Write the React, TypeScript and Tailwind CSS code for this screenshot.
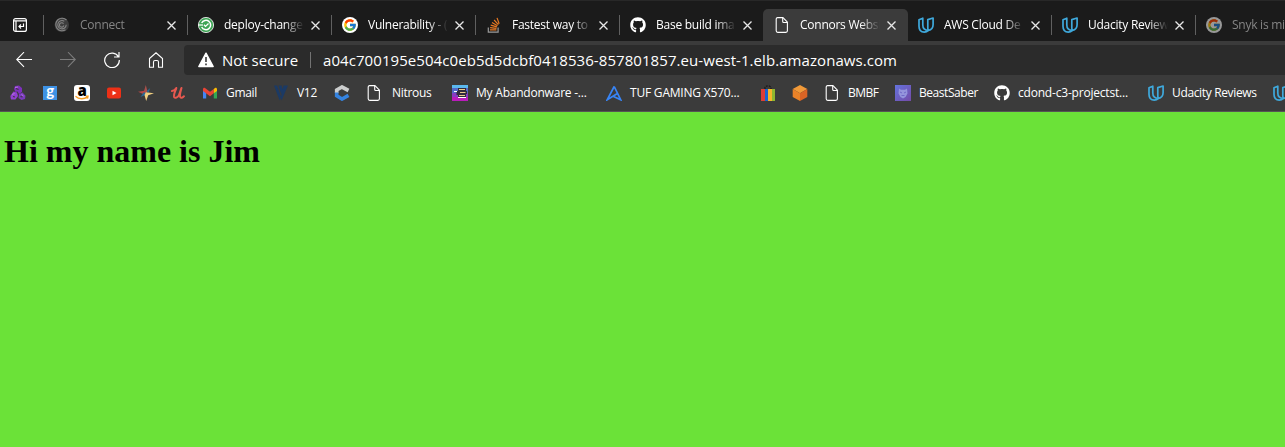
import type { ReactNode } from "react";
import { FcGoogle } from "react-icons/fc";
import { FaGithub } from "react-icons/fa";

const svg = "block h-4 w-4 shrink-0";

const Doc = () => (
  <svg className={svg} viewBox="0 0 16 16" fill="none" stroke="#fff" strokeWidth="1.1" strokeLinejoin="round">
    <path d="M3.5.6H9l4.400 4.600v8.600c0 .9-.6 1.600-1.500 1.600H3.700c-.9 0-1.500-.7-1.500-1.600V2.100C2.200 1.200 2.700.6 3.500.6Z" />
    <path d="M8.700.8v3.700c0 .6.4 1 1 1h3.500" />
  </svg>
);
const Google = ({ dim = false }: { dim?: boolean }) => (
  <span className={`flex h-4 w-4 shrink-0 items-center justify-center rounded-full bg-white ${dim ? "opacity-55" : ""}`}>
    <FcGoogle size={14} />
  </span>
);
const Github = () => <FaGithub className="shrink-0 text-white" size={16} />;
const Udacity = () => (
  <svg className={svg} viewBox="0 0 16 16" fill="none" stroke="#3fa9dc" strokeWidth="1.700" strokeLinejoin="round">
    <path d="M4.800 1.200 1 2.800v6.500c0 3.500 1.900 5.800 5.300 5.800 1.700 0 3-.6 4-1.700C6.800 13.200 4.800 11.300 4.800 8Z" />
    <path d="M9.800 2.600 15.100 1v6.500c0 3.400-1.700 5.400-4.800 5.900-.4-.8-.5-1.700-.5-3Z" />
  </svg>
);
const Stack = () => (
  <svg className={svg} viewBox="0 0 16 16" fill="none">
    <path d="M2.300 10.500v4.600h9.800v-4.600" stroke="#9b9b9b" strokeWidth="1.200" />
    <path d="M4 12.900h6.400M4.100 10.600l6.400.7M4.700 8.200l6.200 1.700M6 5.500l5.500 3.200M8.100 3l4.300 4.700M11 .9l2.200 5.800" stroke="#e87922" strokeWidth="1.200" />
  </svg>
);
const Spiral = () => (
  <svg className={svg} viewBox="0 0 16 16" fill="none">
    <circle cx="7.800" cy="7.800" r="7.200" fill="#3d3d3d" />
    <path d="M12.500 3A6.300 6.300 0 1 0 11.500 12.800M10.300 4.200A4.200 4.200 0 1 0 12.200 7.800M9.500 6.700A2.200 2.200 0 1 0 9.800 8.500" stroke="#858585" strokeWidth="1.100" />
  </svg>
);
const Circle = () => (
  <svg className={svg} viewBox="0 0 16 16" fill="none">
    <circle cx="8" cy="8" r="7.600" fill="#3fa556" stroke="#fff" strokeWidth=".8" />
    <path d="M3.700 6A4.700 4.700 0 1 1 3.700 10" stroke="#fff" strokeWidth="1.500" />
    <path d="M.2 8H5" stroke="#fff" strokeWidth="1.200" />
    <path d="m6 7.800 1.500 1.600L10.500 6.500" stroke="#fff" strokeWidth="1.300" />
  </svg>
);
const Knot = () => (
  <svg className={svg} viewBox="0 0 16 16">
    <path d="m5 1 4-.5 3 2.500v4L9 9 7.500 6.500 5.500 7 4 4Z" fill="#7d30bd" />
    <path d="m3.500 6.500 3.500 1 1 3.500-2.500 3.500L1 14.500.3 11Z" fill="#9140d1" />
    <path d="m9 9 3.500-1.500 3 3.200-.5 3.300-3.500 1-3-2Z" fill="#7a3bbd" />
    <path d="m6 3.500 2.500 1M3 11.500l2 .5M10.500 11.500l2 .5" stroke="#3b3b3b" strokeWidth="1.200" />
    <path d="m5 2.500 3-.500M2 9.500l2.500-1M11.500 9.500l2 1.500" stroke="#b978e2" strokeWidth="1" />
  </svg>
);
const GBlue = () => (
  <span className="mx-px flex h-[14px] w-[14px] items-center justify-center bg-[#3e92e5] font-['Lato',sans-serif] text-[15px] leading-none font-bold text-white">
    <span className="-mt-[5px]">g</span>
  </span>
);
const Amazon = () => (
  <span className="relative flex h-4 w-4 justify-center rounded-[3px] bg-white font-['Open_Sans',sans-serif] text-[15px] leading-[10px] font-extrabold text-black">
    a
    <svg className="absolute inset-0 h-4 w-4" viewBox="0 0 16 16" fill="none" stroke="#f79d22" strokeWidth="1.400">
      <path d="M1.500 11.300c3.500 3.200 8.500 3.200 12 .6M11.800 11.300l2.200-.1-.5 2.500" />
    </svg>
  </span>
);
const Youtube = () => (
  <svg className={svg} viewBox="0 0 16 16">
    <rect x="1" y="2.500" width="14" height="11" rx="2" fill="#ed3016" />
    <path d="m6.500 5.700 4 2.300-4 2.300Z" fill="#fff" />
  </svg>
);
const Star = () => (
  <svg className={svg} viewBox="0 0 16 16">
    <path d="M7.800 0 9.500 6.500 8 8.500 5.800 6.800Z" fill="#a8504c" />
    <path d="M0 6.800 6.500 5.800 8.200 8 5.800 9.300Z" fill="#b64746" />
    <path d="m2.500 12 3.300-4.800L8 8l-.8 2ZM8.800 6l3.400-3L10.300 8Z" fill="#286a96" />
    <path d="M7.800 7.200 16 8.200 10.200 10.200 8.200 16 6.500 10Z" fill="#f0cf80" />
  </svg>
);
const Udemy = () => (
  <svg className={svg} viewBox="0 0 16 16" fill="none" stroke="#e5584f" strokeWidth="2" strokeLinecap="round" strokeLinejoin="round">
    <path d="M2 6C3.500 5.800 5.500 4.500 6.300 3 6 5 3.500 8.500 4 11.500c.5 2.500 4 1 5-1.500C10 7.500 10.800 4.500 11.500 3 10.500 6.500 9.300 10.500 10.200 12c.8 1.300 2.500.8 3.800-.8" />
  </svg>
);
const Gmail = () => (
  <svg className={svg} viewBox="0 0 16 16">
    <path d="M1 4v9.500h3.200V6Z" fill="#4285f4" />
    <path d="M15 4v9.500h-3.200V6Z" fill="#34a853" />
    <path d="M1 6V4.200C1 3 2 2.300 3 3l5 3.800L11.800 4v4.300L8 11.200Z" fill="#ea4335" />
    <path d="M11.800 4 13 3c1-.7 2 0 2 1.200V6l-3.200 2.300Z" fill="#fbbc04" />
  </svg>
);
const V12 = () => (
  <svg className={svg} viewBox="0 0 16 16" fill="#1b3a65">
    <path d="M1 .5h3l4 11-1.300 4ZM5.500.5h3l1.300 4-1.500 5ZM10.500.5H15L8.500 15.500 7.800 13Z" />
  </svg>
);
const Hexagon = () => (
  <svg className={svg} viewBox="0 0 16 16" fill="none" strokeWidth="3.700">
    <path d="M2.700 8V5L8 2l6.500 3.500" stroke="#cbcdcd" />
    <path d="M2.700 7.500v3.300L8 14l6.500-3.600" stroke="#3583df" />
  </svg>
);
const Abandon = () => (
  <svg className={svg} viewBox="0 0 16 16">
    <path fill="#5ab8ed" d="M0 0h16v4H0Z" /><path fill="#5369c8" d="M0 3h16v5H0Z" /><path fill="#873cc2" d="M0 8h16v4H0Z" /><path fill="#b91cba" d="M0 12h16v4H0Z" />
    <path fill="#2f2b3d" d="M6 3h8v3h1v3h-1v4H6v-3H4.500V6H6Z" />
    <path stroke="#eac98a" d="M7 4.500h6M8 7.500h5.500M7 10.500h6" strokeWidth="1.200" />
    <path stroke="#fff" d="M6 12.500h8M2 6.500h3" />
  </svg>
);
const Triangle = () => (
  <svg className={svg} viewBox="0 0 16 16" fill="none" stroke="#3885f6" strokeWidth="1.700">
    <path d="M8.200 1.500 1.200 14.800 11 8.800M8.200 1.500 14.700 14.800 7 11.200" />
  </svg>
);
const Bag = () => (
  <svg className={svg} viewBox="0 0 16 16">
    <path d="M5 4V2.300L6.500 1h3L11 2.300V4" fill="none" stroke="#171717" strokeWidth="1.200" strokeDasharray="2 1" />
    <path fill="#dd3e36" d="M1 4h4v12H1Z" /><path fill="#1764d1" d="M5 4h3v12H5Z" /><path fill="#f5b52c" d="M8 4h4v12H8Z" /><path fill="#8eb62f" d="M12 4h3v12h-3Z" />
  </svg>
);
const Cube = () => (
  <svg className={svg} viewBox="0 0 16 16">
    <path fill="#f19a39" d="m8 0 7.300 4L8 8.200.7 4Z" /><path fill="#e98228" d="M.7 4 8 8.200V16L.7 12Z" /><path fill="#da6425" d="M15.300 4 8 8.200V16l7.300-4Z" />
  </svg>
);
const Beast = () => (
  <svg className={svg} viewBox="0 0 16 16">
    <defs><linearGradient id="beast" x2="1" y2="1"><stop stopColor="#6473de" /><stop offset="1" stopColor="#744ba7" /></linearGradient></defs>
    <path fill="url(#beast)" d="M0 0h16v16H0Z" />
    <path fill="#9494dc" d="m4 3.500 2 1.300h4l2-1.300.5 5-2 3.500L8 13.500 5.500 12l-2-3.500Z" />
    <path stroke="#7068c8" d="m5 7 2 1M11 7 9 8M6.500 10.500h3" />
  </svg>
);

type Tab = { title: string; icon: ReactNode; dim?: boolean; active?: boolean; sep?: boolean };
const tabs: Tab[] = [
  { title: "Connect", icon: <Spiral />, dim: true, sep: true },
  { title: "deploy-change", icon: <Circle />, sep: true },
  { title: "Vulnerability - (", icon: <Google />, sep: true },
  { title: "Fastest way to", icon: <Stack />, sep: true },
  { title: "Base build ima", icon: <Github />, sep: true },
  { title: "Connors Websi", icon: <Doc />, active: true },
  { title: "AWS Cloud De", icon: <Udacity /> },
  { title: "Udacity Review", icon: <Udacity />, sep: true },
  { title: "Snyk is mis", icon: <Google dim />, dim: true, sep: true },
];

type Bookmark = { icon: ReactNode; label?: string; box: string };
const bookmarks: Bookmark[] = [
  { icon: <Knot />, box: "w-8" },
  { icon: <GBlue />, box: "w-8" },
  { icon: <Amazon />, box: "w-8" },
  { icon: <Youtube />, box: "w-8" },
  { icon: <Star />, box: "w-8" },
  { icon: <Udemy />, box: "w-8" },
  { icon: <Gmail />, label: "Gmail", box: "w-[71px] gap-2" },
  { icon: <V12 />, label: "V12", box: "w-[61px] gap-2" },
  { icon: <Hexagon />, box: "w-8" },
  { icon: <Doc />, label: "Nitrous", box: "w-[86px] gap-[10px]" },
  { icon: <Abandon />, label: "My Abandonware -...", box: "w-[154px] gap-2 tracking-[-0.22px]" },
  { icon: <Triangle />, label: "TUF GAMING X570...", box: "w-[154px] gap-2 tracking-[-0.2px]" },
  { icon: <Bag />, box: "w-8" },
  { icon: <Cube />, box: "w-8" },
  { icon: <Doc />, label: "BMBF", box: "w-[71px] gap-2 tracking-[-0.5px]" },
  { icon: <Beast />, label: "BeastSaber", box: "w-[99px] gap-2 tracking-[-0.45px]" },
  { icon: <Github />, label: "cdond-c3-projectst...", box: "w-[154px] gap-2 tracking-[-0.2px]" },
  { icon: <Udacity />, label: "Udacity Reviews", box: "w-[125px] gap-2 tracking-[-0.35px]" },
  { icon: <Udacity />, box: "w-8" },
];

function TabItem({ tab }: { tab: Tab }) {
  return (
    <div className={`flex h-8 shrink-0 items-center ${tab.active ? "-mr-px w-[145px] rounded-t-[5px] bg-[#3b3b3b]" : "w-36"}`}>
      <span className={`h-5 w-px shrink-0 ${tab.sep ? "bg-[#606060]" : ""}`} />
      <span className="ml-[10px] flex h-4 w-4 shrink-0 items-center justify-center">{tab.icon}</span>
      <span className={`ml-[10px] w-[80px] shrink-0 overflow-hidden whitespace-nowrap text-[12px] leading-4 tracking-[-0.25px] [mask-image:linear-gradient(to_right,black_60px,transparent_80px)] ${tab.dim ? "text-[#858585]" : "text-white"}`}>{tab.title}</span>
      <svg className="ml-[7px] h-[9px] w-[9px] shrink-0" viewBox="0 0 9 9" stroke="#e8e8e8" strokeWidth="1.300"><path d="m.5.5 8 8M8.500.5l-8 8" /></svg>
    </div>
  );
}

export default function App() {
  return (
    <div className="flex h-[447px] w-full flex-col overflow-hidden bg-[#6be238] font-['Open_Sans','Noto_Sans',sans-serif]">
      <div className="flex h-[41px] shrink-0 items-end border-t border-[#282828] bg-[#1b1b1b]">
        <div className="flex h-8 w-[43px] shrink-0 items-center pl-[13px]">
          <svg className="h-[14px] w-[14px]" viewBox="0 0 14 14" fill="none" stroke="#fff" strokeWidth="1.200">
            <rect x=".6" y=".6" width="12.800" height="12.800" rx="2" /><path d="M1 2.800h12M3 3v10" /><path d="M10.500 5.500v3h-4M8 6.500l-2 2 2 2" />
          </svg>
        </div>
        {tabs.map((tab) => <TabItem key={tab.title} tab={tab} />)}
      </div>
      <div className="flex h-[38px] shrink-0 items-center bg-[#3b3b3b]">
        <div className="flex w-[184px] shrink-0 items-center pl-4">
          <svg className="h-4 w-4" viewBox="0 0 16 16" fill="none" stroke="#fff" strokeWidth="1.100"><path d="M16 7.500H.7M8 .2.700 7.500 8 14.800" /></svg>
          <svg className="ml-7 h-4 w-4" viewBox="0 0 16 16" fill="none" stroke="#7c7c7c" strokeWidth="1.100"><path d="M0 7.500h15.300M8 .2 15.300 7.500 8 14.800" /></svg>
          <svg className="ml-7 h-4 w-4" viewBox="0 0 16 16" fill="none" stroke="#fff" strokeWidth="1.200"><path d="M14.500 5A7.300 7.300 0 1 0 15.300 8M15 0v5h-5" /></svg>
          <svg className="ml-7 h-4 w-4" viewBox="0 0 16 16" fill="none" stroke="#fff" strokeWidth="1.100"><path d="M1.500 6.500 8 .8l6.500 5.700v8.700h-4V10c0-1-.5-1.500-1.500-1.500H7C6 8.500 5.500 9 5.500 10v5.200h-4Z" /></svg>
        </div>
        <div className="flex h-[30px] grow items-center rounded-l-[4px] bg-[#2b2b2b] pl-[14px] text-[15px] whitespace-nowrap text-white">
          <svg className="h-4 w-4 shrink-0" viewBox="0 0 16 16"><path d="M8 1.200 15.200 14.500H.8Z" fill="#fff" stroke="#fff" strokeWidth="1.400" strokeLinejoin="round" /><path d="M8 5v5M8 11.500v1.700" stroke="#2b2b2b" strokeWidth="1.500" /></svg>
          <span className="ml-2 w-[88px] shrink-0">Not secure</span>
          <span className="h-4 w-px bg-[#737373]" />
          <span className="ml-3 tracking-[0.07px]">a04c700195e504c0eb5d5dcbf0418536-857801857.eu-west-1.elb.amazonaws.com</span>
        </div>
      </div>
      <div className="flex h-[33px] shrink-0 items-center overflow-hidden border-b border-[#555] bg-[#3b3b3b] pb-1 pl-[10px] text-[12px] tracking-[-0.3px] text-white">
        {bookmarks.map((b, i) => (
          <div key={i} className={`flex shrink-0 items-center whitespace-nowrap ${b.box}`}>
            {b.icon}
            {b.label && <span className="leading-4">{b.label}</span>}
          </div>
        ))}
      </div>
      <main className="grow pt-[21px] pl-1">
        <h1 className="font-['Liberation_Serif',serif] text-[32px] leading-[36px] font-bold text-black">Hi my name is Jim</h1>
      </main>
    </div>
  );
}
